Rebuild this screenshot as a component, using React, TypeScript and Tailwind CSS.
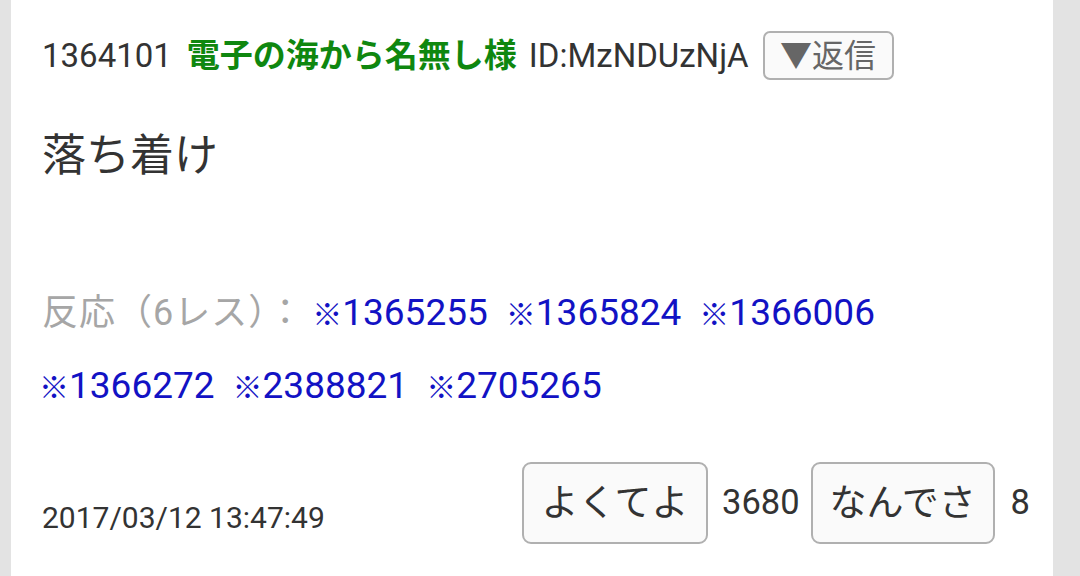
import React from 'react';

const font = { fontFamily: 'Roboto, "Noto Sans CJK JP", sans-serif' };

const refs1 = ['1365255', '1365824', '1366006'];
const refs2 = ['1366272', '2388821', '2705265'];

function RefLink({ num }: { num: string }) {
  return (
    <span className="text-[#1212c4] whitespace-nowrap">
      <span className="font-['Noto_Sans_CJK_JP'] font-bold text-[30px] -ml-[3px]">※</span>
      {num}
    </span>
  );
}

export default function App() {
  return (
    <div className="w-[1080px] h-[576px] bg-[#e3e3e3] flex overflow-hidden" style={font}>
      <div className="ml-[11px] w-[1042px] h-full bg-white pl-[31px] pr-[23px] flex flex-col text-[#333]">
        {/* header */}
        <div className="flex items-center h-[49px] mt-[31px] text-[33px]">
          <span>1364101</span>
          <span className="ml-[15px] font-bold text-[#0f870f] text-[33px]">電子の海から名無し様</span>
          <span className="ml-[12px]">ID:MzNDUzNjA</span>
          <button className="ml-[14px] h-[49px] w-[131px] border-2 border-[#b0b0b0] bg-[#fafafa] rounded-[7px] text-[32px] text-[#666] flex items-center justify-center leading-none">
            ▼返信
          </button>
        </div>

        {/* body */}
        <div className="mt-[46px] text-[44px] leading-[60px] text-[#333]">落ち着け</div>

        {/* reactions */}
        <div className="mt-[90px] text-[37px] leading-[72px]">
          <div className="flex gap-[21px] items-center">
            <span className="text-[#a6a6a6] text-[36px] tracking-[1px] -mr-[10px]">反応（6レス）：</span>
            {refs1.map((r) => (
              <RefLink key={r} num={r} />
            ))}
          </div>
          <div className="flex gap-[21px] items-center">
            {refs2.map((r) => (
              <RefLink key={r} num={r} />
            ))}
          </div>
        </div>

        {/* footer */}
        <div className="mt-[40px] flex items-end justify-between">
          <span className="text-[30px] mb-[4px]">2017/03/12 13:47:49</span>
          <div className="flex items-center text-[34.5px]">
            <button className="h-[82px] w-[186px] border-2 border-[#b0b0b0] bg-[#fafafa] rounded-[9px] text-[37px] leading-none">
              よくてよ
            </button>
            <span className="ml-[14px] mr-[11px]">3680</span>
            <button className="h-[82px] w-[184px] border-2 border-[#b0b0b0] bg-[#fafafa] rounded-[9px] text-[37px] leading-none">
              なんでさ
            </button>
            <span className="ml-[16px]">8</span>
          </div>
        </div>
      </div>
    </div>
  );
}
